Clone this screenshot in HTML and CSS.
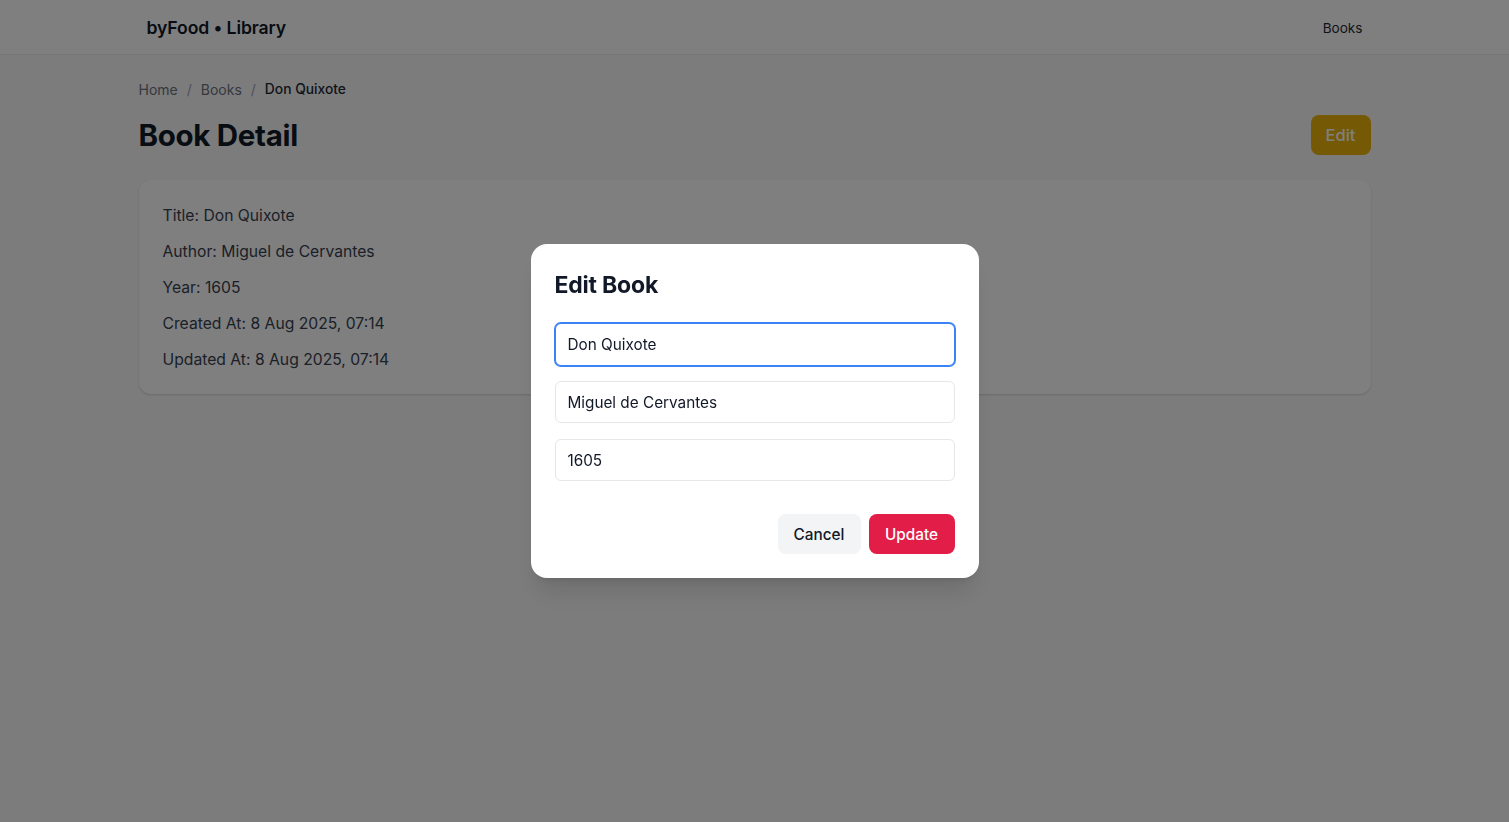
FILE: index.html
```html
<!DOCTYPE html>
<html lang="en">
<head>
<meta charset="utf-8">
<title>byFood • Library</title>
<link rel="stylesheet" href="styles.css">
</head>
<body>
<header class="topbar">
  <div class="topbar-inner">
    <a class="brand" href="#">byFood • Library</a>
    <nav class="nav"><a href="#">Books</a></nav>
  </div>
</header>
<main class="container">
  <nav class="crumbs">
    <a href="#">Home</a><span class="sep">/</span><a href="#">Books</a><span class="sep">/</span><span class="current">Don Quixote</span>
  </nav>
  <div class="page-head">
    <h1>Book Detail</h1>
    <button class="btn btn-edit">Edit</button>
  </div>
  <section class="card">
    <p>Title: Don Quixote</p>
    <p>Author: Miguel de Cervantes</p>
    <p>Year: 1605</p>
    <p>Created At: 8 Aug 2025, 07:14</p>
    <p>Updated At: 8 Aug 2025, 07:14</p>
  </section>
</main>
<div class="overlay">
  <div class="modal">
    <h2>Edit Book</h2>
    <div class="fields">
      <input class="field focused" type="text" value="Don Quixote">
      <input class="field" type="text" value="Miguel de Cervantes">
      <input class="field" type="text" value="1605">
    </div>
    <div class="actions">
      <button class="btn btn-cancel">Cancel</button>
      <button class="btn btn-update">Update</button>
    </div>
  </div>
</div>
</body>
</html>
```

FILE: styles.css
```css
* { box-sizing: border-box; }
html, body { margin: 0; padding: 0; }
body {
  font-family: Inter, "Noto Sans", "Liberation Sans", sans-serif;
  background: #f8f9f9;
  color: #111827;
  min-height: 822px;
}
a { color: inherit; text-decoration: none; }

.topbar {
  background: #ffffff;
  border-bottom: 1px solid #eceeef;
  height: 55px;
}
.topbar-inner {
  max-width: 1280px;
  margin: 0 auto;
  padding: 0 32px;
  height: 100%;
  display: flex;
  align-items: center;
  justify-content: space-between;
}
.brand { font-size: 17.6px; font-weight: 600; color: #111827; letter-spacing: -0.1px; }
.nav a { font-size: 13.6px; color: #1f2937; }

.container {
  max-width: 1280px;
  margin: 0 auto;
  padding: 24px 24px;
}
.crumbs { font-size: 14px; color: #6b7280; display: flex; align-items: center; height: 20px; }
.crumbs .sep { margin: 0 9px; color: #9ca3af; }
.crumbs .current { color: #1f2937; font-weight: 500; font-size: 13.8px; }

.page-head {
  display: flex;
  align-items: center;
  justify-content: space-between;
  margin-top: 16px;
  height: 40px;
}
.page-head h1 { margin: 0; font-size: 29.5px; font-weight: 700; letter-spacing: -0.3px; color: #111827; }

.btn {
  font-family: inherit;
  border: 0;
  cursor: pointer;
  border-radius: 8px;
  font-size: 15.3px;
  font-weight: 500;
}
.btn-edit { background: #eab308; color: #ffffff; height: 40px; width: 60px; font-size: 16.5px; }

.card {
  margin-top: 25px;
  background: #ffffff;
  border-radius: 12px;
  box-shadow: 0 1px 3px rgba(0,0,0,0.1), 0 1px 2px rgba(0,0,0,0.06);
  padding: 24px 24px 10px;
}
.card p { margin: 0 0 12px; font-size: 15.7px; line-height: 24px; color: #374151; }

.overlay {
  position: fixed;
  inset: 0;
  background: rgba(0,0,0,0.5);
  display: flex;
  align-items: center;
  justify-content: center;
}
.modal {
  width: 448px;
  background: #ffffff;
  border-radius: 16px;
  padding: 24px;
  box-shadow: 0 20px 25px -5px rgba(0,0,0,0.1), 0 8px 10px -6px rgba(0,0,0,0.1);
}
.modal h2 { margin: 0; font-size: 23px; line-height: 32px; font-weight: 700; color: #111827; letter-spacing: -0.2px; margin-top: 1px; }
.fields { display: flex; flex-direction: column; gap: 16px; margin-top: 22px; }
.field {
  width: 100%;
  height: 42px;
  border: 1px solid #e5e7eb;
  border-radius: 6px;
  padding: 0 12px;
  font-family: inherit;
  font-size: 15.3px;
  color: #111827;
  background: #fff;
  outline: none;
}
.field.focused { border-color: #3b82f6; box-shadow: 0 0 0 1px #3b82f6; height: 43px; margin-bottom: -1px; }
.actions { display: flex; justify-content: flex-end; gap: 8px; margin-top: 33px; }
.btn-cancel { background: #f3f4f6; color: #111827; height: 40px; width: 83px; }
.btn-update { background: #e11d48; color: #ffffff; height: 40px; width: 86px; }
```
